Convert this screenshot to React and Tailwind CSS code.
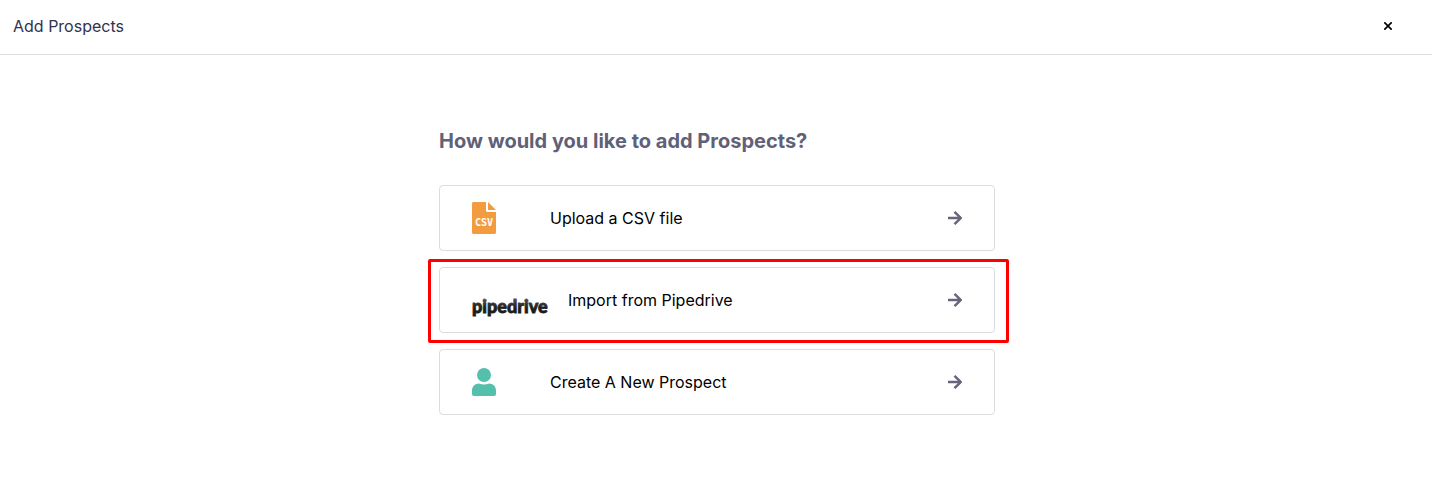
const CsvIcon = () => (
  <svg width="24" height="32" viewBox="0 0 24 32" aria-hidden="true">
    <path
      d="M1.5 0H14v8.5c0 .8.7 1.5 1.5 1.5H24v20.5c0 .8-.7 1.5-1.5 1.5h-21C.7 32 0 31.3 0 30.5v-29C0 .7.7 0 1.5 0z"
      fill="#f39c3f"
    />
    <path d="M16 0l8 8h-8z" fill="#f39c3f" />
    <text
      x="12"
      y="24"
      textAnchor="middle"
      fill="#fff"
      fontFamily="DejaVu Sans Mono, monospace"
      fontSize="10"
      fontWeight="700"
    >
      CSV
    </text>
  </svg>
);

const PersonIcon = () => (
  <svg
    width="24"
    height="28"
    viewBox="0 0 24 28"
    fill="#54bfaa"
    aria-hidden="true"
  >
    <circle cx="12" cy="7" r="7" />
    <path d="M7 15.5c1.5.7 3.2 1 5 1s3.5-.3 5-1c4 0 7 3 7 7V26c0 1.2-.8 2-2 2H2c-1.2 0-2-.8-2-2v-3.5c0-4 3-7 7-7z" />
  </svg>
);

const PipedriveLogo = () => (
  <svg width="76" height="24" viewBox="0 0 76 24" className="mt-3">
    <defs>
      <linearGradient id="pipedrive-ink" x1="0" y1="0" x2="0" y2="1">
        <stop offset="0.2" stopColor="#4a4a4a" />
        <stop offset="0.6" stopColor="#1c1c1c" />
      </linearGradient>
    </defs>
    <text
      x="0"
      y="19"
      fill="url(#pipedrive-ink)"
      stroke="url(#pipedrive-ink)"
      strokeWidth="0.8"
      fontFamily="Lato, sans-serif"
      fontSize="18"
      fontWeight="900"
    >
      pipedrive
    </text>
  </svg>
);

const ArrowIcon = () => (
  <svg
    width="14"
    height="14"
    viewBox="0 0 14 14"
    fill="none"
    stroke="#67647e"
    strokeWidth="2.4"
    aria-hidden="true"
  >
    <path d="M0 7h12.5M6.5.8L12.7 7l-6.2 6.2" />
  </svg>
);

const CloseIcon = () => (
  <svg
    width="8"
    height="8"
    viewBox="0 0 8 8"
    stroke="#000"
    strokeWidth="1.7"
    aria-hidden="true"
  >
    <path d="M.3.3l7.4 7.4M7.7.3L.3 7.7" />
  </svg>
);

const options = [
  { id: "csv", label: "Upload a CSV file", icon: <CsvIcon /> },
  {
    id: "pipedrive",
    label: "Import from Pipedrive",
    icon: <PipedriveLogo />,
    highlighted: true,
  },
  { id: "new", label: "Create A New Prospect", icon: <PersonIcon /> },
];

const OptionCard = ({ label, icon, highlighted = false }) => (
  <li className="relative">
    <button
      type="button"
      className="flex h-[66px] w-full cursor-pointer items-center gap-5 rounded border border-[#dcdcde] bg-white px-8 text-left text-base text-black"
    >
      <span className="flex min-w-[58px] items-center">{icon}</span>
      <span className="flex-1">{label}</span>
      <ArrowIcon />
    </button>
    {highlighted && (
      <div className="pointer-events-none absolute -top-2 -right-3.5 -bottom-2.5 -left-[11px] rounded-xs border-3 border-[#ff0000]" />
    )}
  </li>
);

const App = () => {
  return (
    <div className="min-h-screen bg-white font-['Inter',sans-serif]">
      <header className="flex items-center justify-between border-b border-[#dcdcde] pt-3.5 pr-10 pb-4 pl-[13px]">
        <h1 className="text-base text-[#32324d]">Add Prospects</h1>
        <button type="button" aria-label="Close" className="cursor-pointer">
          <CloseIcon />
        </button>
      </header>
      <main className="py-18 pl-0.5">
        <div className="mx-auto w-full max-w-[556px]">
          <h2 className="text-xl font-bold text-[#5f6178]">
            How would you like to add Prospects?
          </h2>
          <ul className="mt-7.5 flex flex-col gap-4">
            {options.map((option) => (
              <OptionCard
                key={option.id}
                label={option.label}
                icon={option.icon}
                highlighted={option.highlighted}
              />
            ))}
          </ul>
        </div>
      </main>
    </div>
  );
};

export default App;
